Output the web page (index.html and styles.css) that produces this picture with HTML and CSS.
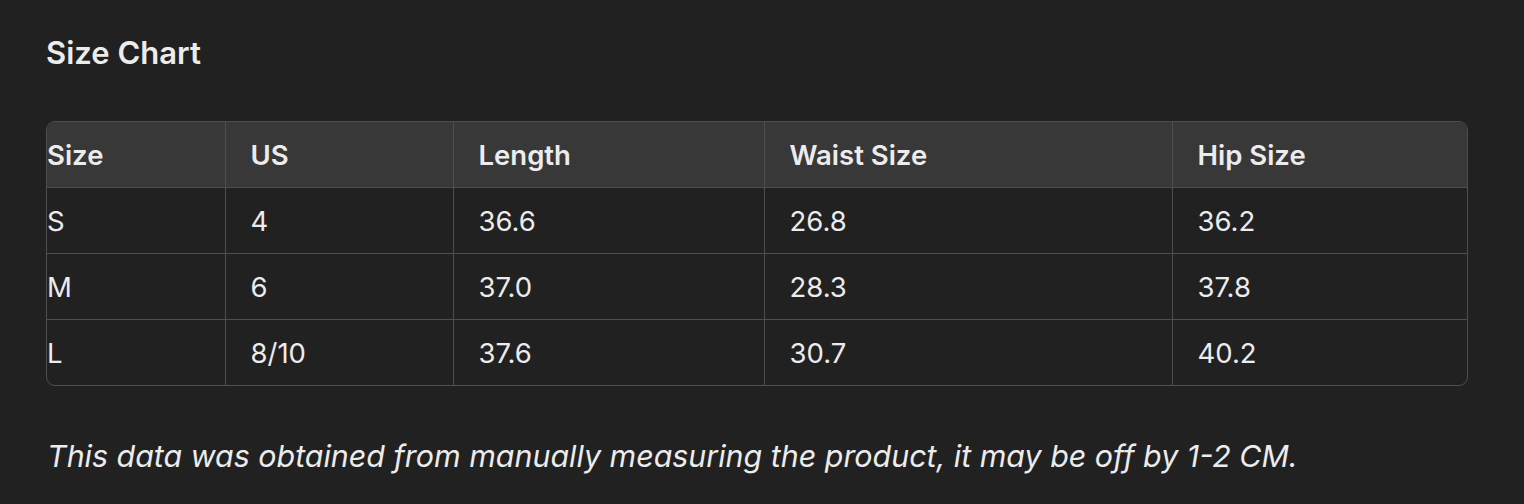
FILE: index.html
```html
<!DOCTYPE html>
<html lang="en">
<head>
<meta charset="utf-8">
<title>Size Chart</title>
<link rel="stylesheet" href="styles.css">
</head>
<body>
<main class="page">
  <h3 class="title">Size Chart</h3>
  <div class="table-wrap">
    <table class="chart">
      <colgroup>
        <col class="c1"><col class="c2"><col class="c3"><col class="c4"><col class="c5">
      </colgroup>
      <thead>
        <tr><th>Size</th><th>US</th><th>Length</th><th>Waist Size</th><th>Hip Size</th></tr>
      </thead>
      <tbody>
        <tr><td>S</td><td>4</td><td>36.6</td><td>26.8</td><td>36.2</td></tr>
        <tr><td>M</td><td>6</td><td>37.0</td><td>28.3</td><td>37.8</td></tr>
        <tr><td>L</td><td>8/10</td><td>37.6</td><td>30.7</td><td>40.2</td></tr>
      </tbody>
    </table>
  </div>
  <p class="note">This data was obtained from manually measuring the product, it may be off by 1-2 CM.</p>
</main>
</body>
</html>
```
FILE: styles.css
```css
html, body {
  margin: 0;
  padding: 0;
  background: #212121;
}
body {
  font-family: Inter, "Noto Sans", sans-serif;
  color: #ececec;
}
.page {
  padding: 33px 56px 0 46px;
}
.title {
  margin: 0;
  font-size: 31px;
  font-weight: 600;
  line-height: 40px;
}
.table-wrap {
  margin-top: 48px;
  border: 1px solid #4e4e4e;
  border-radius: 9px;
  overflow: hidden;
  width: 1420px;
}
.chart {
  width: 100%;
  border-collapse: collapse;
  table-layout: fixed;
  font-size: 27.5px;
}
.c1 { width: 178px; }
.c2 { width: 228px; }
.c3 { width: 311px; }
.c4 { width: 408px; }
.c5 { width: 295px; }
.chart th, .chart td {
  text-align: left;
  padding: 0 25px;
  height: 65px;
  border-left: 1px solid #4e4e4e;
  border-top: 1px solid #4e4e4e;
}
.chart th:first-child, .chart td:first-child {
  padding-left: 0;
  border-left: none;
}
.chart thead tr th {
  border-top: none;
  background: #393839;
  font-weight: 600;
}
.chart td {
  font-weight: 400;
}
.note {
  margin: 50px 0 0 1px;
  font-size: 30.4px;
  font-style: italic;
  line-height: 40px;
}
```
